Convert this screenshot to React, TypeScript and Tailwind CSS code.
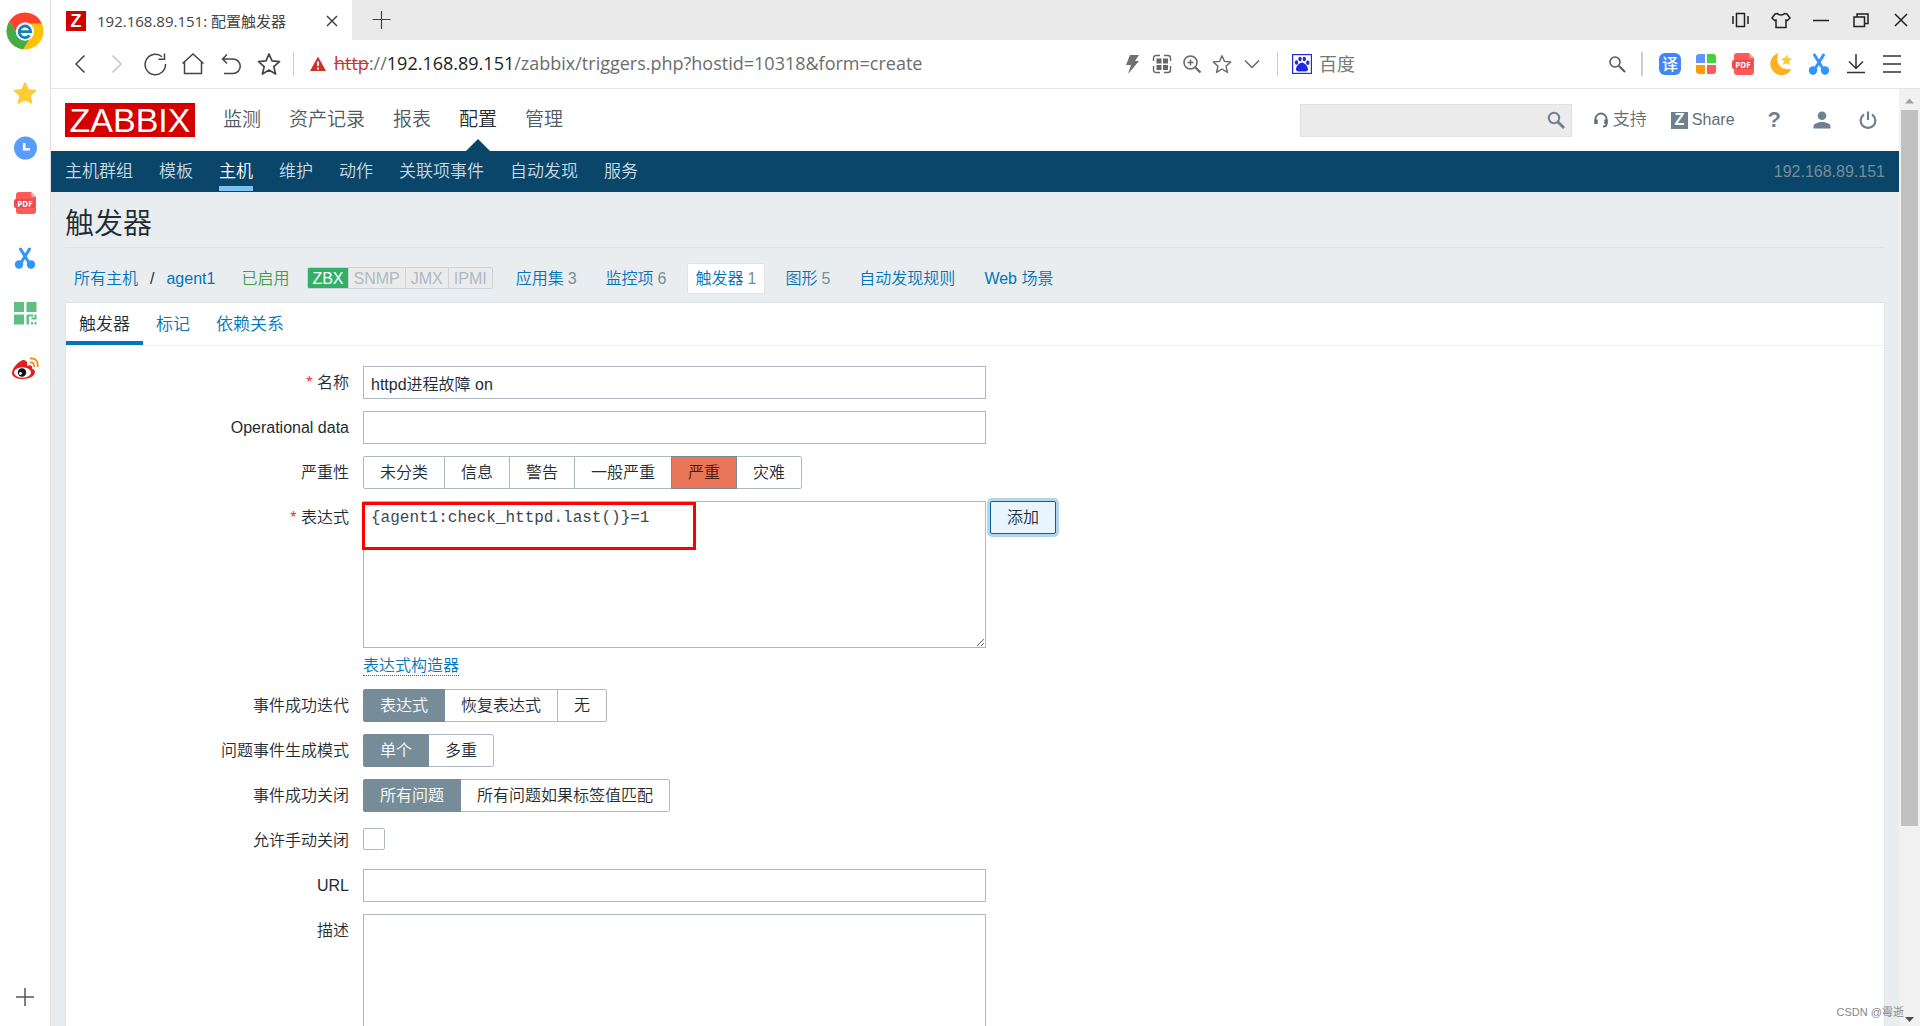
import type { ReactNode } from "react";
import clsx from "clsx";

type IconProps = { className?: string; children: ReactNode; box?: string };

function Line({ className, children, box = "0 0 24 24" }: IconProps) {
  return (
    <svg viewBox={box} className={clsx("shrink-0", className)} fill="none" stroke="currentColor" strokeWidth="1.5" aria-hidden="true">
      {children}
    </svg>
  );
}

function StarIcon({ className, filled }: { className?: string; filled?: boolean }) {
  return (
    <svg viewBox="0 0 24 24" className={clsx("shrink-0", className)} fill={filled ? "#ffcb37" : "none"} stroke={filled ? "#ffcb37" : "currentColor"} strokeWidth="1.7" strokeLinejoin="round" aria-hidden="true">
      <path d="M12 2l3 6.9 7.5.7-5.7 5 1.8 7.4-6.6-4-6.6 4 1.8-7.4-5.7-5L9 8.9z" />
    </svg>
  );
}

function PdfIcon({ className }: { className?: string }) {
  return (
    <svg viewBox="0 0 24 24" className={clsx("shrink-0", className)} aria-hidden="true">
      <path d="M6 1h12l5 5v14a3 3 0 0 1-3 3H6a3 3 0 0 1-3-3V4a3 3 0 0 1 3-3z" fill="#ff5959" />
      <path d="M18 1l5 5h-3a2 2 0 0 1-2-2z" fill="#ffa3a3" />
      <rect x="1" y="8" width="21" height="9" rx="2" fill="#e94b50" />
      <text x="12" y="15.5" fontSize="8" fontWeight="700" fontFamily="Open Sans, sans-serif" textAnchor="middle" fill="#fff">
        PDF
      </text>
    </svg>
  );
}

function ScissorsIcon({ className }: { className?: string }) {
  return (
    <svg viewBox="0 0 24 24" className={clsx("shrink-0", className)} aria-hidden="true">
      <path d="M7.5 3l8 13M16.5 3l-8 13" stroke="#2f96ff" strokeWidth="3" strokeLinecap="round" />
      <circle cx="6" cy="18.5" r="4.2" fill="#2f96ff" />
      <circle cx="18" cy="18.5" r="4.2" fill="#2f96ff" />
    </svg>
  );
}

function BrowserLogo() {
  return (
    <svg viewBox="0 0 38 38" className="size-[38px]" aria-hidden="true">
      <circle cx="19" cy="19" r="18.5" fill="#ffc107" />
      <path d="M3.5 9A18.5 18.5 0 0 1 35.7 11.5H19L11 22z" fill="#ff4131" />
      <path d="M3.5 9A18.5 18.5 0 0 0 17 37.4l7-11.4-13-4z" fill="#45ab49" />
      <circle cx="19" cy="19.5" r="9.2" fill="#fff" />
      <path d="M13.5 19.7h11.3a5.8 5.8 0 1 0-1.3 3.8" fill="none" stroke="#1681b7" strokeWidth="2.8" />
    </svg>
  );
}

function Sidebar() {
  return (
    <aside className="flex w-[51px] shrink-0 flex-col items-center border-r border-[#e2e2e2] bg-white pt-3 pb-[19px]">
      <button aria-label="浏览器"><BrowserLogo /></button>
      <div className="mt-[31px] flex flex-col items-center gap-[31px]">
        <button aria-label="收藏"><StarIcon filled className="size-6" /></button>
        <button aria-label="历史">
          <svg viewBox="0 0 24 24" className="size-6">
            <circle cx="12.5" cy="12" r="11.5" fill="#579cfe" />
            <path d="M11.2 7v6.3H17" fill="none" stroke="#fff" strokeWidth="2.6" />
          </svg>
        </button>
        <button aria-label="PDF"><PdfIcon className="size-6" /></button>
        <button aria-label="截图"><ScissorsIcon className="size-6" /></button>
        <button aria-label="二维码">
          <svg viewBox="0 0 24 24" className="size-6" fill="#5dbf82">
            <path d="M1 1h10v10H1zM13.5 1h10v10h-10zM1 13.5h10v10H1zM13.5 13.5h7v2H16v8h-2.5zM21.5 13.5h2v5h-5v-2h3zM18 21h2v2.5h-2zM21.5 21h2v2.5h-2z" />
          </svg>
        </button>
        <button aria-label="微博">
          <svg viewBox="0 0 28 24" className="h-6 w-7">
            <path d="M12 4c-4 1-11 8-11 13 0 4 5 6 11 6 8 0 12-4 12-7 0-2-2-3-3-3.5.5-3-1.5-4-5-2.5 1-4-1-6-4-6z" fill="#e11f1f" />
            <ellipse cx="11.5" cy="16.5" rx="8.5" ry="5.2" fill="#fff" />
            <circle cx="11" cy="16.5" r="4.2" fill="#111" />
            <circle cx="9.5" cy="17.5" r="1.4" fill="#fff" />
            <path d="M19 6.5c3-.5 4.500 1.500 4 4.500M19 2.500c5.500-1 8.500 3 7.500 8.500" fill="none" stroke="#f08a1d" strokeWidth="1.8" />
          </svg>
        </button>
      </div>
      <button aria-label="添加" className="mt-auto text-[#555]">
        <Line className="size-5" box="0 0 20 20"><path d="M10 1v18M1 10h18" /></Line>
      </button>
    </aside>
  );
}

function TitleBar() {
  return (
    <div className="flex h-10 shrink-0 items-center bg-[#eaeaea]">
      <div className="flex h-full w-[301px] items-center bg-white pt-0.5 pr-3 pl-[15px]">
        <span className="flex size-5 items-center justify-center bg-[#d40000] text-lg leading-5 font-bold text-white">Z</span>
        <span className="ml-[11px] font-['Open_Sans','Noto_Sans_CJK_SC',sans-serif] text-[15px] text-[#444]">192.168.89.151: 配置触发器</span>
        <button aria-label="关闭标签页" className="ml-auto text-[#444]">
          <Line className="size-4" box="0 0 16 16"><path d="M3 3l10 10M13 3L3 13" /></Line>
        </button>
      </div>
      <button aria-label="新建标签页" className="ml-5 text-[#444]">
        <Line className="size-5" box="0 0 20 20"><path d="M9.5 1v18M.5 9.500h18" strokeWidth="1.2" /></Line>
      </button>
      <div className="ml-auto flex items-center gap-5 pr-[9px] text-[#222]">
        <button aria-label="分屏"><Line className="size-5" box="0 0 20 20"><path d="M5.500 3.500h8v13h-8zM2 6v8M17 6v8" /></Line></button>
        <button aria-label="皮肤"><Line className="size-5" box="0 0 20 20"><path d="M6.500 3.500c1.500 2 5.500 2 7 0L16 4l3 4-2.500 2.500-1.500-.5v7.500H5V10l-1.500.5L1 8l3-4z" /></Line></button>
        <button aria-label="最小化"><Line className="size-5" box="0 0 20 20"><path d="M2 10.500h16" /></Line></button>
        <button aria-label="还原"><Line className="size-5" box="0 0 20 20"><path d="M3 7h10.500v9.500H3zM6 7V4h11v9.500h-3" /></Line></button>
        <button aria-label="关闭"><Line className="size-5" box="0 0 20 20"><path d="M4 4l12 12M16 4L4 16" /></Line></button>
      </div>
    </div>
  );
}

function Toolbar() {
  return (
    <div className="flex h-[49px] shrink-0 items-center border-b border-[#e5e5e5] bg-white pb-px font-['Open_Sans','Noto_Sans_CJK_SC',sans-serif]">
      <div className="flex items-center gap-3.5 pl-4 text-[#444]">
        <button aria-label="后退"><Line className="size-6"><path d="M17.500 3.500L9 12l8.500 8.500" /></Line></button>
        <button aria-label="前进" className="text-[#c4c4c4]"><Line className="size-6"><path d="M7.500 3.500L16 12l-8.500 8.500" /></Line></button>
        <button aria-label="刷新"><Line className="size-6"><path d="M22.500 12A10.200 10.200 0 1 1 19 4.800M21.500 1.500v5.800h-6" /></Line></button>
        <button aria-label="主页"><Line className="size-6"><path d="M1.500 11.500L12 2l10.500 9.500M3.500 10v11.500h17V10" /></Line></button>
        <button aria-label="撤销"><Line className="size-6"><path d="M8 2.500L3.500 7 8 11.500M3.500 7H14a7 7 0 0 1 0 14.500H5" /></Line></button>
        <button aria-label="收藏"><StarIcon className="size-6" /></button>
      </div>
      <span className="ml-3 h-6 w-px bg-[#ccc]" />
      <svg viewBox="0 0 16 16" className="ml-4 size-4 shrink-0" aria-hidden="true">
        <path d="M8 .5L16 15H0z" fill="#c8352b" />
        <path d="M8 5.500v4.500M8 11.500v2" stroke="#fff" strokeWidth="1.8" />
      </svg>
      <div className="ml-2 text-[18px] whitespace-nowrap text-[#6c6c6c]">
        <span className="text-[#c8352b] line-through">http</span>://<span className="text-[#222]">192.168.89.151</span>/zabbix/triggers.php?hostid=10318&amp;form=create
      </div>
      <div className="ml-auto flex items-center gap-2.5 text-[#666]">
        <button aria-label="加速">
          <svg viewBox="0 0 20 20" className="size-5"><path d="M8 1h9l-4 6h4L6 20l3-9H4z" fill="#707070" /></svg>
        </button>
        <button aria-label="二维码">
          <svg viewBox="0 0 20 20" className="size-5" fill="none" stroke="#666" strokeWidth="1.4">
            <path d="M1.500 7V4a2.500 2.500 0 0 1 2.500-2.500h4M12 1.500h4A2.500 2.500 0 0 1 18.500 4v3M18.500 12v4a2.500 2.500 0 0 1-2.500 2.500h-4M8 18.500H4A2.500 2.500 0 0 1 1.500 16v-4" />
            <path d="M4.500 4.500h5v5h-5zM11 4.500h5v5h-5zM4.500 11h5v5h-5zM11 11h5v5h-5z" fill="#666" stroke="none" />
          </svg>
        </button>
        <button aria-label="放大">
          <Line className="size-5" box="0 0 20 20"><circle cx="8.5" cy="8.5" r="6.5" /><path d="M13.500 13.500l5 5" strokeWidth="2.2" /><path d="M8.500 5.500v6M5.500 8.500h6" /></Line>
        </button>
        <button aria-label="收藏"><StarIcon className="size-5" /></button>
        <button aria-label="更多"><Line className="size-5" box="0 0 20 20"><path d="M3 6.500l7 7 7-7" /></Line></button>
      </div>
      <span className="ml-[15px] h-6 w-px bg-[#ccc]" />
      <svg viewBox="0 0 20 20" className="ml-[14px] size-5 shrink-0" fill="#2228e0" aria-hidden="true">
        <rect x=".6" y=".6" width="18.8" height="18.8" fill="#fff" stroke="#2228e0" strokeWidth="1.2" />
        <ellipse cx="4.5" cy="8.5" rx="1.7" ry="2.3" />
        <ellipse cx="8" cy="5" rx="1.7" ry="2.3" />
        <ellipse cx="12.300" cy="5" rx="1.7" ry="2.3" />
        <ellipse cx="15.800" cy="8.8" rx="1.7" ry="2.3" />
        <path d="M10 8.500c2.500 0 6 4 6 6.500 0 3-3 2.500-6 2.200-3 .3-6 .8-6-2.200 0-2.500 3.500-6.500 6-6.500z" />
      </svg>
      <input aria-label="搜索" placeholder="百度" className="ml-[7px] h-9 w-[288px] text-[18px] outline-none placeholder:text-[#777]" />
      <button aria-label="搜索" className="text-[#555]">
        <Line className="size-5" box="0 0 20 20"><circle cx="8" cy="8" r="5" /><path d="M12 12l6 6" strokeWidth="2" /></Line>
      </button>
      <span className="ml-3.5 h-6 w-0.5 bg-[#ccc]" />
      <div className="flex items-center gap-3.5 pr-[17px] pl-4 text-[#333]">
        <button aria-label="翻译" className="size-[22px] rounded-md bg-[#4285f4] text-base leading-[22px] font-medium text-white">译</button>
        <button aria-label="应用">
          <svg viewBox="0 0 22 22" className="size-[22px]">
            <path d="M4 1h6v9H1V4a3 3 0 0 1 3-3z" fill="#6495fa" />
            <path d="M12 1h6a3 3 0 0 1 3 3v6h-9z" fill="#44d13d" />
            <path d="M1 12h9v9H4a3 3 0 0 1-3-3z" fill="#fc9c0a" />
            <path d="M12 12h9v6a3 3 0 0 1-3 3h-6z" fill="#fd5c5c" />
          </svg>
        </button>
        <button aria-label="PDF"><PdfIcon className="size-6" /></button>
        <button aria-label="夜间模式">
          <svg viewBox="0 0 24 24" className="size-6">
            <path d="M10 1C6 6 8 19 22.500 17A11.200 11.200 0 1 1 10 1z" fill="#ffb01c" />
            <path d="M17.500 2.500l1.700 3.500 3.800.5-2.800 2.700.7 3.800-3.400-1.800-3.400 1.800.7-3.800L12 6.500l3.800-.5z" fill="#ffcb37" />
          </svg>
        </button>
        <button aria-label="截图"><ScissorsIcon className="size-6" /></button>
        <button aria-label="下载"><Line className="size-[22px]" box="0 0 22 22"><path d="M11 1v14M4 8.500l7 7 7-7M2 19.500h18" /></Line></button>
        <button aria-label="菜单"><Line className="size-[22px]" box="0 0 22 22"><path d="M2 3h18M2 11h18M2 19h18" /></Line></button>
      </div>
    </div>
  );
}

const MENU = ["监测", "资产记录", "报表", "配置", "管理"];
const SUBMENU = ["主机群组", "模板", "主机", "维护", "动作", "关联项事件", "自动发现", "服务"];

function Header() {
  return (
    <header>
      <div className="flex h-[62px] items-center bg-white px-3.5">
        <a href="#" className="flex h-[34px] w-[130px] items-center justify-center bg-[#d40000] text-[34px] leading-[34px] font-normal text-white">ZABBIX</a>
        <nav className="ml-7 flex h-full gap-7 text-[19px]">
          {MENU.map((item) => (
            <a key={item} href="#" className={clsx("relative flex items-center pt-px", item === "配置" ? "text-[#1f2c33]" : "text-[#4f5a61]")}>
              {item}
              {item === "配置" && (
                <span className="absolute bottom-0 left-1/2 -translate-x-1/2 border-x-12 border-b-12 border-x-transparent border-b-[#0a466a]" />
              )}
            </a>
          ))}
        </nav>
        <form className="ml-auto flex h-[33px] w-[272px] items-center border border-[#e2e2e2] bg-[#ebebeb] pr-1.5">
          <input aria-label="搜索" className="h-full min-w-0 flex-1 bg-transparent px-2 outline-none" />
          <button type="button" aria-label="搜索" className="text-[#6d828e]">
            <Line className="size-[18px]" box="0 0 18 18"><circle cx="7" cy="7" r="5.2" strokeWidth="2" /><path d="M11 11l6 6" strokeWidth="2.8" /></Line>
          </button>
        </form>
        <div className="flex items-center pr-2 text-[#5f6f79]">
          <a href="#" className="ml-[21px] flex items-center gap-1 text-[17px]">
            <Line className="size-4" box="0 0 16 16">
              <path d="M2.500 12V7a5.500 5.500 0 0 1 11 0v5.500c0 1.500-1 2-3.500 2" strokeWidth="1.8" />
              <path d="M3 7.500v4.500M13 7.500v4.500" strokeWidth="3.4" />
            </Line>
            支持
          </a>
          <a href="#" className="ml-6 flex items-center gap-1">
            <span className="flex size-[17px] items-center justify-center bg-[#6d828e] text-base leading-none font-bold text-white">Z</span>
            Share
          </a>
          <a href="#" aria-label="帮助" className="ml-[33px] text-[22px] leading-6 font-bold text-[#6d828e]">?</a>
          <a href="#" aria-label="用户" className="ml-8">
            <svg viewBox="0 0 18 18" className="size-[18px]" fill="#6d828e"><circle cx="9" cy="4.800" r="4.3" /><path d="M.5 17.500v-2c0-3 4.500-4.500 8.500-4.500s8.500 1.500 8.500 4.500v2z" /></svg>
          </a>
          <a href="#" aria-label="退出" className="ml-7 text-[#6d828e]">
            <Line className="size-[18px]" box="0 0 18 18"><path d="M5 3.500a7.300 7.300 0 1 0 8 0M9 .5v8.500" strokeWidth="2.2" /></Line>
          </a>
        </div>
      </div>
      <div className="flex h-[41px] items-center bg-[#0a466a] px-3.5">
        <nav className="flex h-full gap-[26px] text-[17px]">
          {SUBMENU.map((item) => (
            <a key={item} href="#" className={clsx("my-px flex items-center border-b-5 pt-1.5", item === "主机" ? "border-[#7ec3f3] text-white" : "border-transparent text-[#c9dbe6]")}>
              {item}
            </a>
          ))}
        </nav>
        <span className="ml-auto text-[#768d99]">192.168.89.151</span>
      </div>
    </header>
  );
}

const COUNTERS = [
  { name: "应用集", count: 3 },
  { name: "监控项", count: 6 },
  { name: "触发器", count: 1, selected: true },
  { name: "图形", count: 5 },
  { name: "自动发现规则" },
  { name: "Web 场景" },
];

function HostNav() {
  return (
    <div className="flex h-[54px] items-center pt-1.5 pl-[9px] text-[#0275b8]">
      <div className="flex items-center gap-3 pt-0.5">
        <a href="#">所有主机</a>
        <span className="text-[#1f2c33]">/</span>
        <a href="#">agent1</a>
      </div>
      <span className="ml-[26px] pt-0.5 text-[#429e47]">已启用</span>
      <div className="ml-[18px] flex h-[22px] overflow-hidden rounded-xs border border-[#ccd5d9] bg-[#ebebeb] leading-[22px] text-[#acbbc2]">
        <span className="-m-px border border-[#2f9f5e] bg-[#34af67] px-1 text-white">ZBX</span>
        <span className="border-l border-[#ccd5d9] px-[5px]">SNMP</span>
        <span className="border-l border-[#ccd5d9] px-[5px]">JMX</span>
        <span className="border-l border-[#ccd5d9] px-[5px]">IPMI</span>
      </div>
      <div className="ml-3.5 flex items-center gap-[11px]">
        {COUNTERS.map(({ name, count, selected }) => (
          <a key={name} href="#" className={clsx("flex h-[31px] items-center gap-1 rounded-xs border px-2 pt-0.5", selected ? "border-[#dfe4e7] bg-white" : "border-transparent")}>
            {name}
            {count !== undefined && <span className="text-[#768d99]">{count}</span>}
          </a>
        ))}
      </div>
    </div>
  );
}

function Row({ label, htmlFor, required, children }: { label: string; htmlFor?: string; required?: boolean; children: ReactNode }) {
  return (
    <div className="flex gap-3.5">
      <label htmlFor={htmlFor} className="w-[283px] shrink-0 text-right leading-[33px]">
        {required && <span className="text-[#e33734]">* </span>}
        {label}
      </label>
      {children}
    </div>
  );
}

function Segmented({ name, options, selected, severity }: { name: string; options: string[]; selected: string; severity?: boolean }) {
  return (
    <div role="radiogroup" aria-label={name} className="flex h-[33px]">
      {options.map((option) => (
        <label
          key={option}
          className={clsx(
            "relative -mr-px flex items-center border px-4 first:rounded-l-xs last:rounded-r-xs",
            option !== selected && "border-[#acbbc2]",
            option === selected && severity && "z-10 border-[#768d99] bg-[#e97659] text-[#52190b]",
            option === selected && !severity && "z-10 border-[#768d99] bg-[#768d99] text-white",
          )}
        >
          <input type="radio" name={name} defaultChecked={option === selected} className="sr-only" />
          {option}
        </label>
      ))}
    </div>
  );
}

const FIELD = "w-[623px] border border-[#acbbc2] bg-white px-[7px] outline-none";

function TriggerForm() {
  return (
    <form className="flex flex-col gap-3 pt-5">
      <Row label="名称" htmlFor="name" required>
        <input id="name" defaultValue="httpd进程故障 on" className={clsx(FIELD, "h-[33px]")} />
      </Row>
      <Row label="Operational data" htmlFor="opdata">
        <input id="opdata" className={clsx(FIELD, "h-[33px]")} />
      </Row>
      <Row label="严重性">
        <Segmented name="severity" severity selected="严重" options={["未分类", "信息", "警告", "一般严重", "严重", "灾难"]} />
      </Row>
      <Row label="表达式" htmlFor="expression" required>
        <div>
          <div className="relative flex items-start gap-1">
            <textarea
              id="expression"
              spellCheck={false}
              defaultValue="{agent1:check_httpd.last()}=1"
              className={clsx(FIELD, "h-[147px] resize py-1 font-['Liberation_Mono',monospace] leading-6 text-[#3c484e]")}
            />
            <button type="button" className="h-[33px] w-[66px] rounded-xs border border-[#02659f] bg-[#e8f4ff] text-[#1f2c33] ring-3 ring-[#0275b8]/30">
              添加
            </button>
            <span className="pointer-events-none absolute top-px -left-px h-12 w-[334px] border-3 border-[#ff0000]" />
          </div>
          <div className="flex h-[29px] items-end pb-px">
            <a href="#" className="border-b border-dotted border-[#0275b8] leading-[18px] text-[#0275b8]">表达式构造器</a>
          </div>
        </div>
      </Row>
      <Row label="事件成功迭代">
        <Segmented name="recovery" selected="表达式" options={["表达式", "恢复表达式", "无"]} />
      </Row>
      <Row label="问题事件生成模式">
        <Segmented name="mode" selected="单个" options={["单个", "多重"]} />
      </Row>
      <Row label="事件成功关闭">
        <Segmented name="close" selected="所有问题" options={["所有问题", "所有问题如果标签值匹配"]} />
      </Row>
      <Row label="允许手动关闭" htmlFor="manual">
        <input id="manual" type="checkbox" className="mt-1 size-[22px] appearance-none rounded-xs border border-[#acbbc2] bg-white" />
      </Row>
      <Row label="URL" htmlFor="url">
        <input id="url" className={clsx(FIELD, "h-[33px]")} />
      </Row>
      <Row label="描述" htmlFor="description">
        <textarea id="description" className={clsx(FIELD, "h-[176px]")} />
      </Row>
    </form>
  );
}

function Scrollbar() {
  return (
    <div className="flex w-[21px] shrink-0 flex-col items-center bg-[#f1f1f1]">
      <svg viewBox="0 0 21 21" className="size-[21px]" aria-hidden="true"><path d="M6 14.500h9L10.500 9.500z" fill="#a3a3a3" /></svg>
      <div className="w-[17px] flex-4 bg-[#c1c1c1]" />
      <div className="flex-1" />
      <svg viewBox="0 0 21 21" className="size-[21px]" aria-hidden="true"><path d="M6 12h9l-4.500 5z" fill="#505050" /></svg>
    </div>
  );
}

export default function App() {
  return (
    <div className="relative flex h-screen overflow-hidden bg-white font-['Liberation_Sans','Noto_Sans_CJK_SC',sans-serif] text-base text-[#1f2c33]">
      <Sidebar />
      <div className="flex min-w-0 flex-1 flex-col">
        <TitleBar />
        <Toolbar />
        <div className="flex min-h-0 flex-1">
          <div className="min-w-0 flex-1 overflow-hidden bg-[#e9edf0] font-[350]">
            <Header />
            <main className="px-3.5">
              <h1 className="flex h-14 items-center border-b border-[#dfe4e7] pt-2.5 text-[29px]">触发器</h1>
              <HostNav />
              <section className="border border-[#dfe4e7] bg-white pb-5">
                <div role="tablist" className="flex h-[43px] border-b border-[#ebeef0] text-[17px]">
                  <button role="tab" aria-selected="true" className="border-b-4 border-[#0275b8] px-[13px] pt-1.5">触发器</button>
                  <button role="tab" className="px-[13px] pt-0.5 text-[#0275b8]">标记</button>
                  <button role="tab" className="px-[13px] pt-0.5 text-[#0275b8]">依赖关系</button>
                </div>
                <TriggerForm />
              </section>
            </main>
          </div>
          <Scrollbar />
        </div>
      </div>
      <span className="absolute right-4 bottom-1.5 text-[11px] text-[#888]">CSDN @霉逝</span>
    </div>
  );
}
